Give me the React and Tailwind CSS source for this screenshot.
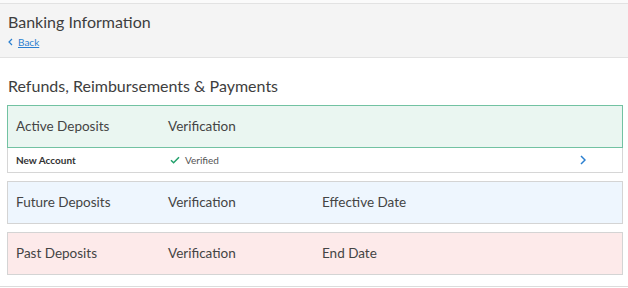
export default function App() {
  return (
    <div className="w-[628px] h-[288px] bg-white overflow-hidden text-[#444]" style={{ fontFamily: 'Lato, "Open Sans", sans-serif' }}>
      <div className="h-[3px] bg-[#fafafa]" />
      <div className="bg-[#f4f4f4] border-t border-b border-[#e2e2e2] h-[55px] pl-2 pt-[8px]">
        <h1 className="text-[16px] leading-[19px] text-[#3e3e3e]">Banking Information</h1>
        <a href="#" className="flex items-center gap-[5px] mt-[5px] text-[10px] leading-[12px] text-[#2a7fd0]">
          <svg width="5" height="8" viewBox="0 0 5 8" fill="none" stroke="#2a7fd0" strokeWidth="1.2"><path d="M4 1 1 4l3 3" /></svg>
          <span className="underline">Back</span>
        </a>
      </div>
      <h2 className="text-[16px] leading-[20px] text-[#3e3e3e] pl-2 mt-[18px]">Refunds, Reimbursements &amp; Payments</h2>

      <div className="ml-[7px] mr-[5px] mt-[9px] flex flex-col">
        <div className="h-[43px] flex items-center bg-[#eaf6f1] border border-[#72c2a2] text-[13.5px]">
          <span className="w-[160px] pl-2">Active Deposits</span>
          <span>Verification</span>
        </div>
        <div className="h-[25px] flex items-center bg-white border border-t-0 border-[#d6d6d6] text-[10px]">
          <span className="w-[160px] pl-2 font-bold text-[#333]">New Account</span>
          <svg width="10" height="8" viewBox="0 0 10 8" fill="none" stroke="#22a06b" strokeWidth="1.5" className="ml-[2px]"><path d="M1 4.2 3.6 6.8 9 1.2" /></svg>
          <span className="ml-[5px] text-[#555]">Verified</span>
          <svg width="6" height="10" viewBox="0 0 6 10" fill="none" stroke="#2a7fd0" strokeWidth="1.5" className="ml-auto mr-[36px]"><path d="M1 1l4 4-4 4" /></svg>
        </div>

        <div className="h-[43px] mt-[8px] flex items-center bg-[#eef6fe] border border-[#d4d4d4] text-[13.5px]">
          <span className="w-[160px] pl-2">Future Deposits</span>
          <span className="w-[154px]">Verification</span>
          <span>Effective Date</span>
        </div>

        <div className="h-[43px] mt-[8px] flex items-center bg-[#fdeaea] border border-[#d4d4d4] text-[13.5px]">
          <span className="w-[160px] pl-2">Past Deposits</span>
          <span className="w-[154px]">Verification</span>
          <span>End Date</span>
        </div>
      </div>
      <div className="mt-[11px] border-t border-[#dcdcdc]" />
    </div>
  )
}
